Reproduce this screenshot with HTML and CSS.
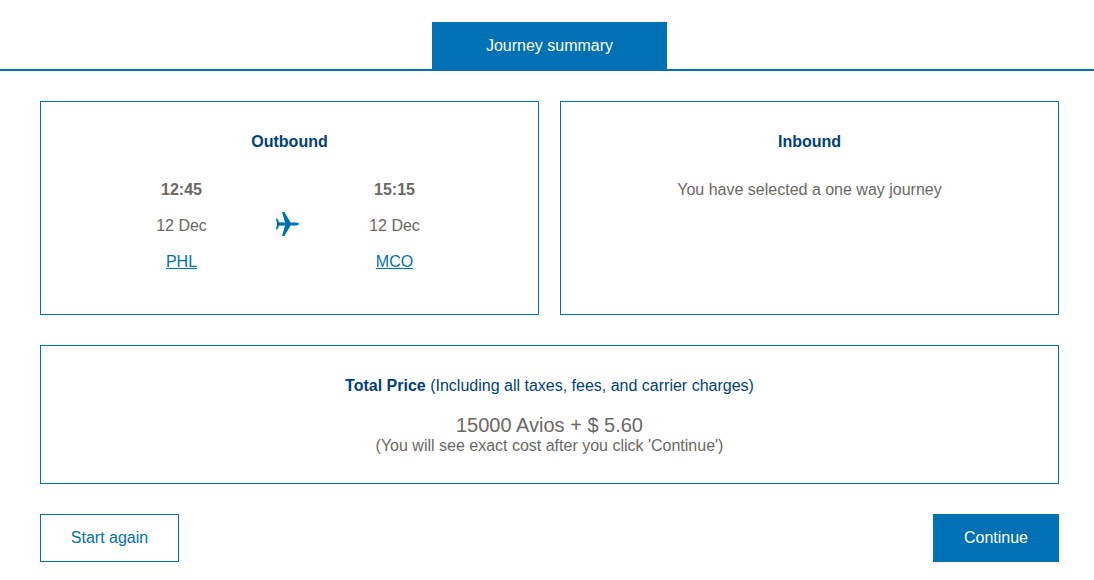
FILE: index.html
```html
<!DOCTYPE html>
<html lang="en">
<head>
<meta charset="utf-8">
<title>Journey summary</title>
<link rel="stylesheet" href="styles.css">
</head>
<body>
<div class="tabs"><div class="tab">Journey summary</div></div>
<main class="content">
  <div class="cards">
    <section class="card">
      <h2 class="card-title">Outbound</h2>
      <div class="route">
        <div class="stop">
          <div class="time">12:45</div>
          <div class="line">12 Dec</div>
          <div class="line"><a href="#" class="code">PHL</a></div>
        </div>
        <svg class="plane" viewBox="0 0 24 26" width="24" height="26" aria-hidden="true"><path d="M1 7.6 L2.4 7.6 L4 11.3 L10 11.5 L7 1 L9.4 1 L15.6 11.4 L21 11.6 C23 11.8 24 12.5 24 13 C24 13.5 23 14.2 21 14.4 L15.6 14.6 L9.4 25 L7 25 L10 14.5 L4 14.7 L2.4 18.4 L1 18.4 L2 13 Z" fill="#0071b5"/></svg>
        <div class="stop">
          <div class="time">15:15</div>
          <div class="line">12 Dec</div>
          <div class="line"><a href="#" class="code">MCO</a></div>
        </div>
      </div>
    </section>
    <section class="card">
      <h2 class="card-title">Inbound</h2>
      <p class="note">You have selected a one way journey</p>
    </section>
  </div>
  <section class="total">
    <p class="total-head"><strong>Total Price</strong> (Including all taxes, fees, and carrier charges)</p>
    <p class="amount">15000 Avios + $ 5.60</p>
    <p class="exact">(You will see exact cost after you click 'Continue')</p>
  </section>
  <div class="actions">
    <a href="#" class="btn btn-outline">Start again</a>
    <a href="#" class="btn btn-solid">Continue</a>
  </div>
</main>
</body>
</html>
```
FILE: styles.css
```css
* { box-sizing: border-box; }
html, body { margin: 0; padding: 0; background: #fff; }
body {
  font-family: "Liberation Sans", Arial, sans-serif;
  font-size: 16px;
  color: #6b6866;
}
.tabs {
  margin-top: 22px;
  display: flex;
  justify-content: center;
  padding-left: 5px;
  border-bottom: 2px solid #0071b5;
}
.tab {
  width: 235px;
  height: 47px;
  background: #0071b5;
  color: #fff;
  display: flex;
  align-items: center;
  justify-content: center;
}
.content { padding: 30px 35px 0 40px; }
.cards { display: flex; gap: 21px; }
.card {
  flex: 1;
  height: 214px;
  border: 1px solid #0071b5;
  padding-top: 30px;
  text-align: center;
}
.card-title {
  margin: 0;
  font-size: 16px;
  line-height: 20px;
  font-weight: bold;
  color: #003f7f;
}
.route {
  display: flex;
  align-items: center;
  margin: 20px 0 0 46px;
}
.stop { width: 189px; flex: none; }
.plane { flex: none; margin-bottom: 4px; margin-left: -1px; margin-right: 1px; }
.time { font-weight: bold; line-height: 36px; }
.line { line-height: 36px; }
.code { color: #0071b5; text-decoration: underline; }
.note { margin: 20px 0 0; line-height: 36px; }
.total {
  margin-top: 30px;
  height: 139px;
  border: 1px solid #0071b5;
  text-align: center;
  padding-top: 30px;
}
.total-head { margin: 0; line-height: 20px; color: #003f7f; }
.amount { margin: 17px 0 0; font-size: 20px; line-height: 24px; }
.exact { margin: 0; line-height: 18px; }
.actions {
  margin-top: 30px;
  display: flex;
  justify-content: space-between;
}
.btn {
  height: 48px;
  display: flex;
  align-items: center;
  justify-content: center;
  text-decoration: none;
}
.btn-outline { width: 139px; border: 1px solid #0071b5; color: #0071b5; }
.btn-solid { width: 126px; background: #0071b5; color: #fff; }
```
